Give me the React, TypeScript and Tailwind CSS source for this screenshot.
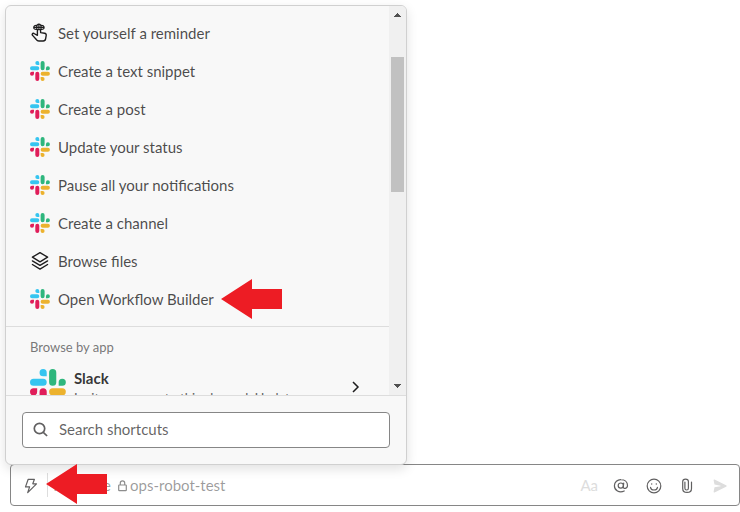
import React from "react";

function SlackLogo({ className }: { className: string }) {
  return (
    <svg viewBox="0 0 54 54" className={className}>
      <path fill="#36C5F0" d="M19.712.133a5.381 5.381 0 0 0-5.376 5.387 5.381 5.381 0 0 0 5.376 5.386h5.376V5.52A5.381 5.381 0 0 0 19.712.133m0 14.365H5.376A5.381 5.381 0 0 0 0 19.884a5.381 5.381 0 0 0 5.376 5.387h14.336a5.381 5.381 0 0 0 5.376-5.387 5.381 5.381 0 0 0-5.376-5.386" />
      <path fill="#2EB67D" d="M53.76 19.884a5.381 5.381 0 0 0-5.376-5.386 5.381 5.381 0 0 0-5.376 5.386v5.387h5.376a5.381 5.381 0 0 0 5.376-5.387m-14.336 0V5.52A5.381 5.381 0 0 0 34.048.133a5.381 5.381 0 0 0-5.376 5.387v14.364a5.381 5.381 0 0 0 5.376 5.387 5.381 5.381 0 0 0 5.376-5.387" />
      <path fill="#ECB22E" d="M34.048 54a5.381 5.381 0 0 0 5.376-5.387 5.381 5.381 0 0 0-5.376-5.386h-5.376v5.386A5.381 5.381 0 0 0 34.048 54m0-14.365h14.336a5.381 5.381 0 0 0 5.376-5.386 5.381 5.381 0 0 0-5.376-5.387H34.048a5.381 5.381 0 0 0-5.376 5.387 5.381 5.381 0 0 0 5.376 5.386" />
      <path fill="#E01E5A" d="M0 34.249a5.381 5.381 0 0 0 5.376 5.386 5.381 5.381 0 0 0 5.376-5.386v-5.387H5.376A5.381 5.381 0 0 0 0 34.25m14.336-.001v14.364A5.381 5.381 0 0 0 19.712 54a5.381 5.381 0 0 0 5.376-5.387V34.25a5.381 5.381 0 0 0-5.376-5.387 5.381 5.381 0 0 0-5.376 5.387" />
    </svg>
  );
}

function ReminderIcon() {
  return (
    <svg viewBox="0 0 20 20" className="h-5 w-5" fill="none" stroke="#1d1c1d" strokeWidth="1.4" strokeLinecap="round" strokeLinejoin="round">
      <path d="M7.4 7.4v4.9L4 10.5c-1.4-.6-2.5.8-1.4 1.9l3.5 3.9c.9 1.3 1.5 1.7 2.8 1.7h4.3c1.4 0 2.2-.7 2.4-2.1l.6-3.4c.2-1.2-.4-2-1.6-2.2l-4-.7V7.4" />
      <path strokeWidth="1.2" d="M6.9 2.4C5 2 3.7 2.9 3.7 4.4S5 6.8 6.9 6.3M10.9 2.4c1.9-.4 3.2.5 3.2 2s-1.3 2.4-3.2 1.9M7 6.3c-.7-1.6-.5-3.2.3-4.4.8-1 2.4-1 3.2 0 .8 1.2 1 2.8.3 4.4-.8.6-3 .6-3.8 0M4 4.4h9.8M8.9 1.3v5.2" />
    </svg>
  );
}

function LayersIcon() {
  return (
    <svg viewBox="0 0 20 20" className="h-5 w-5" fill="none" stroke="#1d1c1d" strokeWidth="1.35" strokeLinecap="round" strokeLinejoin="round">
      <path d="M10 1.6 17.6 6.2 10 10.8 2.4 6.2Z" />
      <path d="m2.4 9.9 7.6 4.5 7.6-4.5M2.4 13.5l7.6 4.6 7.6-4.6" />
    </svg>
  );
}

function RedArrow() {
  return (
    <svg viewBox="0 0 61 40" className="h-10 w-[61px]">
      <path fill="#ed1c24" d="M0 20 31 0v10h30v20H31v10Z" />
    </svg>
  );
}

const shortcuts = [
  { label: "Set yourself a reminder", icon: <ReminderIcon /> },
  { label: "Create a text snippet" },
  { label: "Create a post" },
  { label: "Update your status" },
  { label: "Pause all your notifications" },
  { label: "Create a channel" },
  { label: "Browse files", icon: <LayersIcon /> },
  { label: "Open Workflow Builder" },
];

function ShortcutList() {
  return (
    <div className="h-full min-w-0 flex-1 overflow-hidden">
      <ul className="h-[321px] border-b border-[#dddddd] pt-[8px]">
        {shortcuts.map((s) => (
          <li key={s.label} className="flex h-[38px] items-center gap-2 pl-6 text-[15px] text-[#1d1c1d]/80">
            {s.icon ?? <SlackLogo className="h-5 w-5" />}
            <span>{s.label}</span>
          </li>
        ))}
      </ul>
      <div className="pt-[10px] pl-6 text-[13px] leading-[20px] text-[#616061]/85">Browse by app</div>
      <div className="flex pt-[11px] pl-6">
        <SlackLogo className="mt-px h-9 w-9" />
        <div className="w-[276px] pl-2 whitespace-nowrap">
          <div className="text-[15px] leading-[20px] font-bold text-[#1d1c1d]/90">Slack</div>
          <div className="text-[13px] leading-[20px] text-[#616061]">Invite someone to this channel, Update…</div>
        </div>
        <svg viewBox="0 0 8 12" className="mt-[13px] ml-[10px] h-3 w-2" fill="none" stroke="#1d1c1d" strokeWidth="1.5">
          <path d="m1 1 5 5-5 5" />
        </svg>
      </div>
    </div>
  );
}

function Scrollbar() {
  return (
    <div className="flex h-full w-[17px] flex-col items-center bg-[#f0f0f0]">
      <svg viewBox="0 0 7 4" className="mt-[7px] h-1 w-[7px] shrink-0" fill="#505050" shapeRendering="crispEdges">
        <path d="M0 4 3.5 0 7 4Z" />
      </svg>
      <div className="mt-10 h-[135px] w-[13px] shrink-0 bg-[#c1c1c1]" />
      <svg viewBox="0 0 7 4" className="mt-auto mb-[7px] h-1 w-[7px] shrink-0" fill="#505050" shapeRendering="crispEdges">
        <path d="M0 0h7L3.5 4Z" />
      </svg>
    </div>
  );
}

function ShortcutMenu() {
  return (
    <section className="relative z-10 ml-[5px] h-[460px] w-[402px] overflow-hidden rounded-[6px] border border-[#d0d0d0] bg-[#f8f8f8] shadow-[0_4px_12px_rgba(0,0,0,0.12)]">
      <div className="flex h-[389px]">
        <ShortcutList />
        <Scrollbar />
      </div>
      <div className="border-t border-[#dddddd] px-4 py-4">
        <div className="flex h-9 items-center rounded border border-[#868686] bg-white pb-[2px] pl-[10px] text-[15px] text-[#1d1c1d]/70">
          <svg viewBox="0 0 15 15" className="mr-[11px] h-[15px] w-[15px]" fill="none" stroke="#616061" strokeWidth="1.7">
            <circle cx="6.5" cy="6.5" r="5.2" />
            <path d="m10.3 10.3 3.8 3.7" />
          </svg>
          <span>Search shortcuts</span>
        </div>
      </div>
    </section>
  );
}

function Composer() {
  return (
    <section className="-mt-px ml-[10px] flex h-[42px] w-[730px] items-center rounded border border-[#868686] bg-white text-[15px]">
      <svg viewBox="0 0 14 16" className="mt-px ml-[13px] h-4 w-[14px]" fill="none" stroke="#616061" strokeWidth="1.2" strokeLinejoin="round">
        <path d="M4.2 1.3h6.2L8.8 5.8h3.7L3.7 14.6l1.9-5.7H1.5Z" />
      </svg>
      <div className="ml-[9px] h-6 w-px bg-[#dddddd]" />
      <div className="ml-[3px] flex w-[187px] items-center text-[#1d1c1d]/45">
        <span className="w-[60px] text-right">Message</span>
        <svg viewBox="0 0 9 12" className="mt-px ml-[7px] h-3 w-[9px]" fill="none" stroke="#8d8d8d" strokeWidth="1.2">
          <rect x=".7" y="5" width="7.6" height="5.6" rx=".6" />
          <path d="M2.3 5V3a2.2 2.2 0 0 1 4.4 0v2" />
        </svg>
        <span className="ml-[3px] whitespace-nowrap">ops-robot-test</span>
      </div>
      <div className="ml-auto flex h-full items-center text-[#616061]">
        <span className="mr-[15px] text-[15px] text-[#dddddd]">Aa</span>
        <svg viewBox="0 0 16 16" className="mt-[2px] mr-[17px] h-4 w-4" fill="none" stroke="currentColor" strokeWidth="1.2" strokeLinecap="round">
          <circle cx="7.8" cy="7.6" r="2.6" />
          <path d="m10.7 5.1-.4 3.8c-.2 2.3 4.2 2.1 4.2-1.3 0-3.6-2.8-6-6.5-6a6.3 6.3 0 0 0-6.6 6.2c0 4.6 4.9 7.6 9.8 5.2" />
        </svg>
        <svg viewBox="0 0 16 16" className="mt-[2px] mr-[19px] h-4 w-4" fill="none" stroke="currentColor" strokeWidth="1.2" strokeLinecap="round">
          <circle cx="8" cy="8" r="6.8" />
          <path d="M4.5 9.3c.8 3.6 6.2 3.6 7 0" />
          <circle cx="5.7" cy="6" r=".7" fill="currentColor" stroke="none" />
          <circle cx="10.3" cy="6" r=".7" fill="currentColor" stroke="none" />
        </svg>
        <svg viewBox="0 0 12 16" className="mt-[2px] mr-[20px] h-4 w-3" fill="none" stroke="currentColor" strokeWidth="1.2" strokeLinecap="round">
          <path d="M3.9 4.1v6.1c0 2.4 3.5 2.4 3.5 0V3.5c0-3.3-5.7-3.3-5.7 0v6.9c0 5.4 8.8 5.4 8.8 0V4.1" />
        </svg>
        <svg viewBox="0 0 14 14" className="mt-[2px] mr-[12px] h-[14px] w-[14px]" fill="#dddddd">
          <path d="M.6 1.2c0-.5.4-.8.9-.6l11.6 5.6c.7.4.7 1.1 0 1.5L1.5 13.4c-.5.2-.9-.1-.9-.6l.9-4.5 6.1-1.1v-.5L1.5 5.6Z" />
        </svg>
      </div>
    </section>
  );
}

export default function App() {
  return (
    <main className="relative h-[512px] w-[740px] overflow-hidden bg-white pt-[5px] font-['Lato',sans-serif]">
      <ShortcutMenu />
      <Composer />
      <div className="absolute top-[279px] left-[221px] z-20"><RedArrow /></div>
      <div className="absolute top-[464px] left-[46px] z-20"><RedArrow /></div>
    </main>
  );
}
